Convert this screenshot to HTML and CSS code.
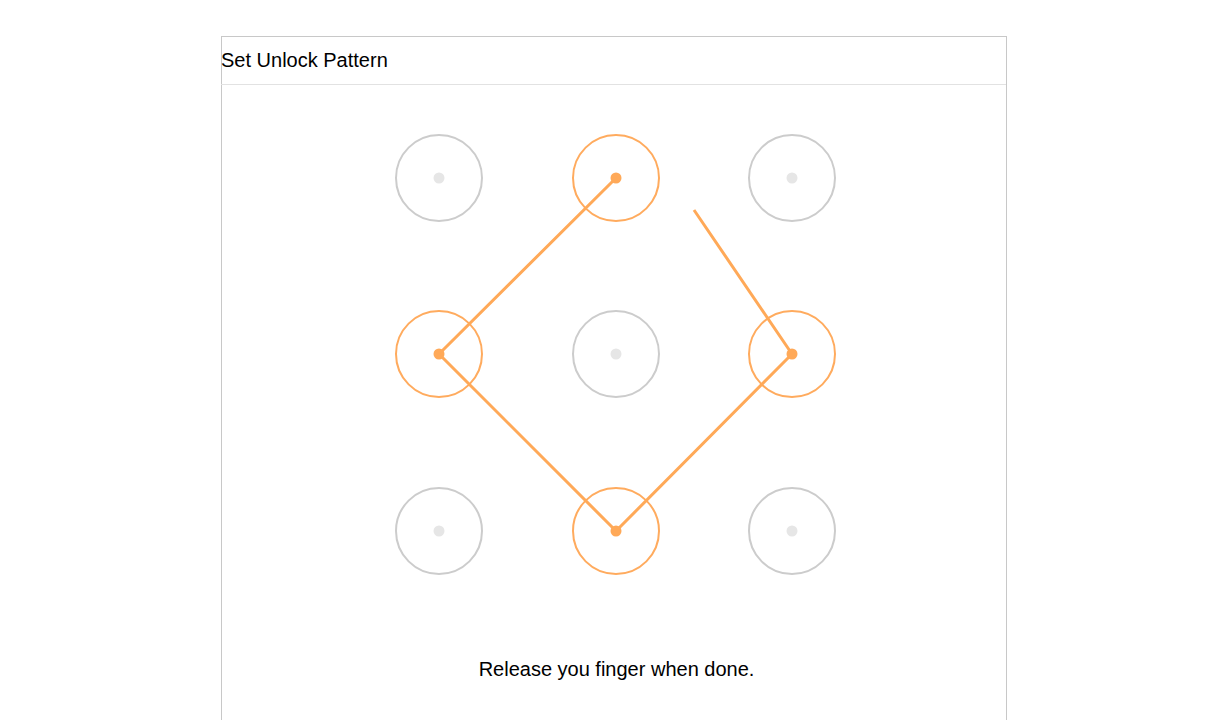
FILE: index.html
```html
<!DOCTYPE html>
<html lang="en">
<head>
    <meta charset="UTF-8">
    <title>Set Unlock Pattern</title>
    <link rel="stylesheet" href="styles.css">
</head>
<body>

<div class="panel">
    <div class="panel-title">Set Unlock Pattern</div>
    <div class="panel-body">
        <svg class="pattern" width="784" height="560" viewBox="222 84 784 560">
            <g class="cell">
                <circle cx="439" cy="177" r="43"/><circle class="dot" cx="439" cy="177" r="5.5"/>
                <circle cx="792" cy="177" r="43"/><circle class="dot" cx="792" cy="177" r="5.5"/>
                <circle cx="616" cy="353" r="43"/><circle class="dot" cx="616" cy="353" r="5.5"/>
                <circle cx="439" cy="530" r="43"/><circle class="dot" cx="439" cy="530" r="5.5"/>
                <circle cx="792" cy="530" r="43"/><circle class="dot" cx="792" cy="530" r="5.5"/>
            </g>
            <g class="cell active">
                <circle cx="616" cy="177" r="43"/>
                <circle cx="439" cy="353" r="43"/>
                <circle cx="792" cy="353" r="43"/>
                <circle cx="616" cy="530" r="43"/>
            </g>
            <polyline class="trail" points="616,177 439,353 616,530 792,353 694,209"/>
            <g class="active-dots">
                <circle cx="616" cy="177" r="5.5"/>
                <circle cx="439" cy="353" r="5.5"/>
                <circle cx="792" cy="353" r="5.5"/>
                <circle cx="616" cy="530" r="5.5"/>
            </g>
        </svg>
        <div class="hint">Release you finger when done.</div>
    </div>
</div>

</body>
</html>
```

FILE: styles.css
```css
body {
    margin: 0;
    background-color: #fff;
    font-family: "Liberation Sans", Arial, sans-serif;
    color: #000;
}
.panel {
    margin: 36px 0 0 221px;
    width: 784px;
    height: 700px;
    border: 1px solid #c8c8c8;
    border-bottom: none;
}
.panel-title {
    height: 47px;
    line-height: 47px;
    font-size: 20px;
    margin-left: -1px;
    border-bottom: 1px solid #e2e2e2;
}
.pattern {
    display: block;
}
.cell circle {
    fill: none;
    stroke: #cccccc;
    stroke-width: 2;
}
.cell circle.dot {
    fill: #e6e6e6;
    stroke: none;
}
.cell.active circle {
    stroke: #ffab5e;
}
.trail {
    fill: none;
    stroke: #ffa958;
    stroke-width: 3;
    stroke-linejoin: round;
}
.active-dots circle {
    fill: #ffa958;
}
.hint {
    height: 48px;
    line-height: 48px;
    text-align: center;
    font-size: 20px;
    padding-left: 5px;
}
```
